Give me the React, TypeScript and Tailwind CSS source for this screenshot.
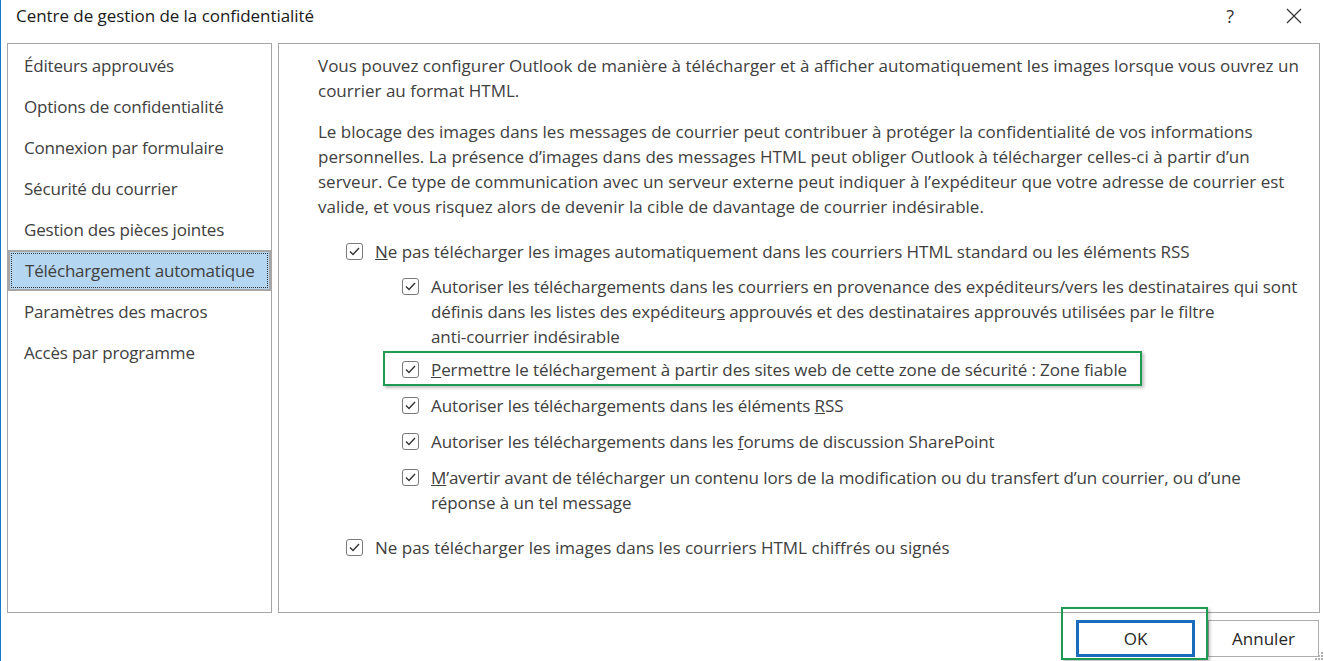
import { ReactNode } from 'react';

const navItems = [
  'Éditeurs approuvés',
  'Options de confidentialité',
  'Connexion par formulaire',
  'Sécurité du courrier',
  'Gestion des pièces jointes',
  'Téléchargement automatique',
  'Paramètres des macros',
  'Accès par programme',
];

function CheckBox() {
  return (
    <span className="flex-none w-[17px] h-[17px] mt-[4px] border border-[#7a7a7a] rounded-[3px] bg-white flex items-center justify-center">
      <svg width="11" height="9" viewBox="0 0 11 9">
        <path d="M1 4.5 L4 7.5 L10 1" fill="none" stroke="#333" strokeWidth="1.4" />
      </svg>
    </span>
  );
}

function Option({ lines, className = '' }: { lines: ReactNode[]; className?: string }) {
  return (
    <div className={`flex gap-[12px] ${className}`}>
      <CheckBox />
      <div>
        {lines.map((l, i) => (
          <div key={i} className="whitespace-nowrap leading-[25px]">
            {l}
          </div>
        ))}
      </div>
    </div>
  );
}

export default function App() {
  return (
    <div
      className="w-[1324px] h-[661px] bg-white border-l border-[#1979ca] relative overflow-hidden text-[#404040]"
      style={{ fontFamily: '"Open Sans", "Noto Sans", sans-serif' }}
    >
      {/* Title bar */}
      <div className="h-[43px] flex items-start pt-[3px] pl-[15px] pr-[22px]">
        <div className="text-[17px] leading-[26px] text-[#1a1a1a] tracking-[-0.05px]">
          Centre de gestion de la confidentialité
        </div>
        <div className="ml-auto flex items-center gap-[52px] h-[26px]">
          <span className="text-[18px] text-[#333]">?</span>
          <svg width="16" height="16" viewBox="0 0 16 16">
            <path d="M1 1 L15 15 M15 1 L1 15" stroke="#333" strokeWidth="1.2" />
          </svg>
        </div>
      </div>

      {/* Panels */}
      <div className="flex gap-[6px] pl-[6px] h-[570px]">
        <div className="w-[265px] h-full border border-[#a6a6a6] pt-[1px]">
          {navItems.map((item, i) =>
            i === 5 ? (
              <div key={item} className="h-[41px] bg-[#b4d6f1] border-2 border-[#a6a6a6] p-[1px]">
                <div className="h-full border border-dotted border-[#333] flex items-center pl-[13px] text-[17px] tracking-[-0.2px]">
                  {item}
                </div>
              </div>
            ) : (
              <div key={item} className="h-[41px] flex items-center pl-[16px] text-[17px] tracking-[-0.2px]">
                {item}
              </div>
            )
          )}
        </div>

        <div className="w-[1042px] h-full border border-[#a6a6a6] pt-[9px] pl-[39px] text-[17px]">
          <div className="leading-[25px]">
            <div className="whitespace-nowrap">
              Vous pouvez configurer Outlook de manière à télécharger et à afficher automatiquement les images lorsque vous ouvrez un
            </div>
            <div>courrier au format HTML.</div>
          </div>
          <div className="leading-[25px] mt-[16px]">
            <div className="whitespace-nowrap">
              Le blocage des images dans les messages de courrier peut contribuer à protéger la confidentialité de vos informations
            </div>
            <div className="whitespace-nowrap">
              personnelles. La présence d’images dans des messages HTML peut obliger Outlook à télécharger celles-ci à partir d’un
            </div>
            <div className="whitespace-nowrap">
              serveur. Ce type de communication avec un serveur externe peut indiquer à l’expéditeur que votre adresse de courrier est
            </div>
            <div className="whitespace-nowrap">
              valide, et vous risquez alors de devenir la cible de davantage de courrier indésirable.
            </div>
          </div>

          <Option
            className="mt-[20px] ml-[28px] tracking-[-0.04px]"
            lines={[
              <>
                <span className="underline">N</span>e pas télécharger les images automatiquement dans les courriers HTML standard ou les éléments RSS
              </>,
            ]}
          />
          <div className="ml-[84px] tracking-[-0.1px]">
            <Option
              className="mt-[10px]"
              lines={[
                'Autoriser les téléchargements dans les courriers en provenance des expéditeurs/vers les destinataires qui sont',
                <>
                  définis dans les listes des expéditeur<span className="underline">s</span> approuvés et des destinataires approuvés utilisées par le filtre
                </>,
                'anti-courrier indésirable',
              ]}
            />
            <div className="relative mt-[8px]">
              <Option
                lines={[
                  <>
                    <span className="underline">P</span>ermettre le téléchargement à partir des sites web de cette zone de sécurité : Zone fiable
                  </>,
                ]}
              />
              <div className="absolute left-[-19px] top-[-6px] w-[759px] h-[35px] border-2 border-[#1f9a52] shadow-[2px_2px_3px_rgba(0,0,0,0.25)]" />
            </div>
            <Option
              className="mt-[11px]"
              lines={[
                <>
                  Autoriser les téléchargements dans les éléments <span className="underline">R</span>SS
                </>,
              ]}
            />
            <Option
              className="mt-[11px]"
              lines={[
                <>
                  Autoriser les téléchargements dans les <span className="underline">f</span>orums de discussion SharePoint
                </>,
              ]}
            />
            <Option
              className="mt-[11px]"
              lines={[
                <>
                  <span className="underline">M</span>’avertir avant de télécharger un contenu lors de la modification ou du transfert d’un courrier, ou d’une
                </>,
                'réponse à un tel message',
              ]}
            />
          </div>
          <Option
            className="mt-[20px] ml-[28px]"
            lines={['Ne pas télécharger les images dans les courriers HTML chiffrés ou signés']}
          />
        </div>
      </div>

      {/* Footer buttons */}
      <div className="flex justify-end gap-[13px] pt-[7px] pr-[5px]">
        <div className="relative">
          <button className="w-[119px] h-[37px] border-[3px] border-[#1c6cbe] bg-white text-[17px] text-[#262626]">
            OK
          </button>
          <div className="absolute left-[-15px] top-[-13px] w-[147px] h-[53px] border-2 border-[#1f9a52] shadow-[2px_2px_3px_rgba(0,0,0,0.25)]" />
        </div>
        <button className="w-[111px] h-[37px] border border-[#adadad] bg-white text-[17px] text-[#262626]">
          Annuler
        </button>
      </div>

      {/* resize grip */}
      <svg className="absolute right-[1px] bottom-[1px]" width="8" height="8" viewBox="0 0 8 8">
        <rect x="6" y="0" width="2" height="2" fill="#b0b0b0" />
        <rect x="3" y="3" width="2" height="2" fill="#b0b0b0" />
        <rect x="6" y="3" width="2" height="2" fill="#b0b0b0" />
        <rect x="0" y="6" width="2" height="2" fill="#b0b0b0" />
        <rect x="3" y="6" width="2" height="2" fill="#b0b0b0" />
        <rect x="6" y="6" width="2" height="2" fill="#b0b0b0" />
      </svg>
    </div>
  );
}
